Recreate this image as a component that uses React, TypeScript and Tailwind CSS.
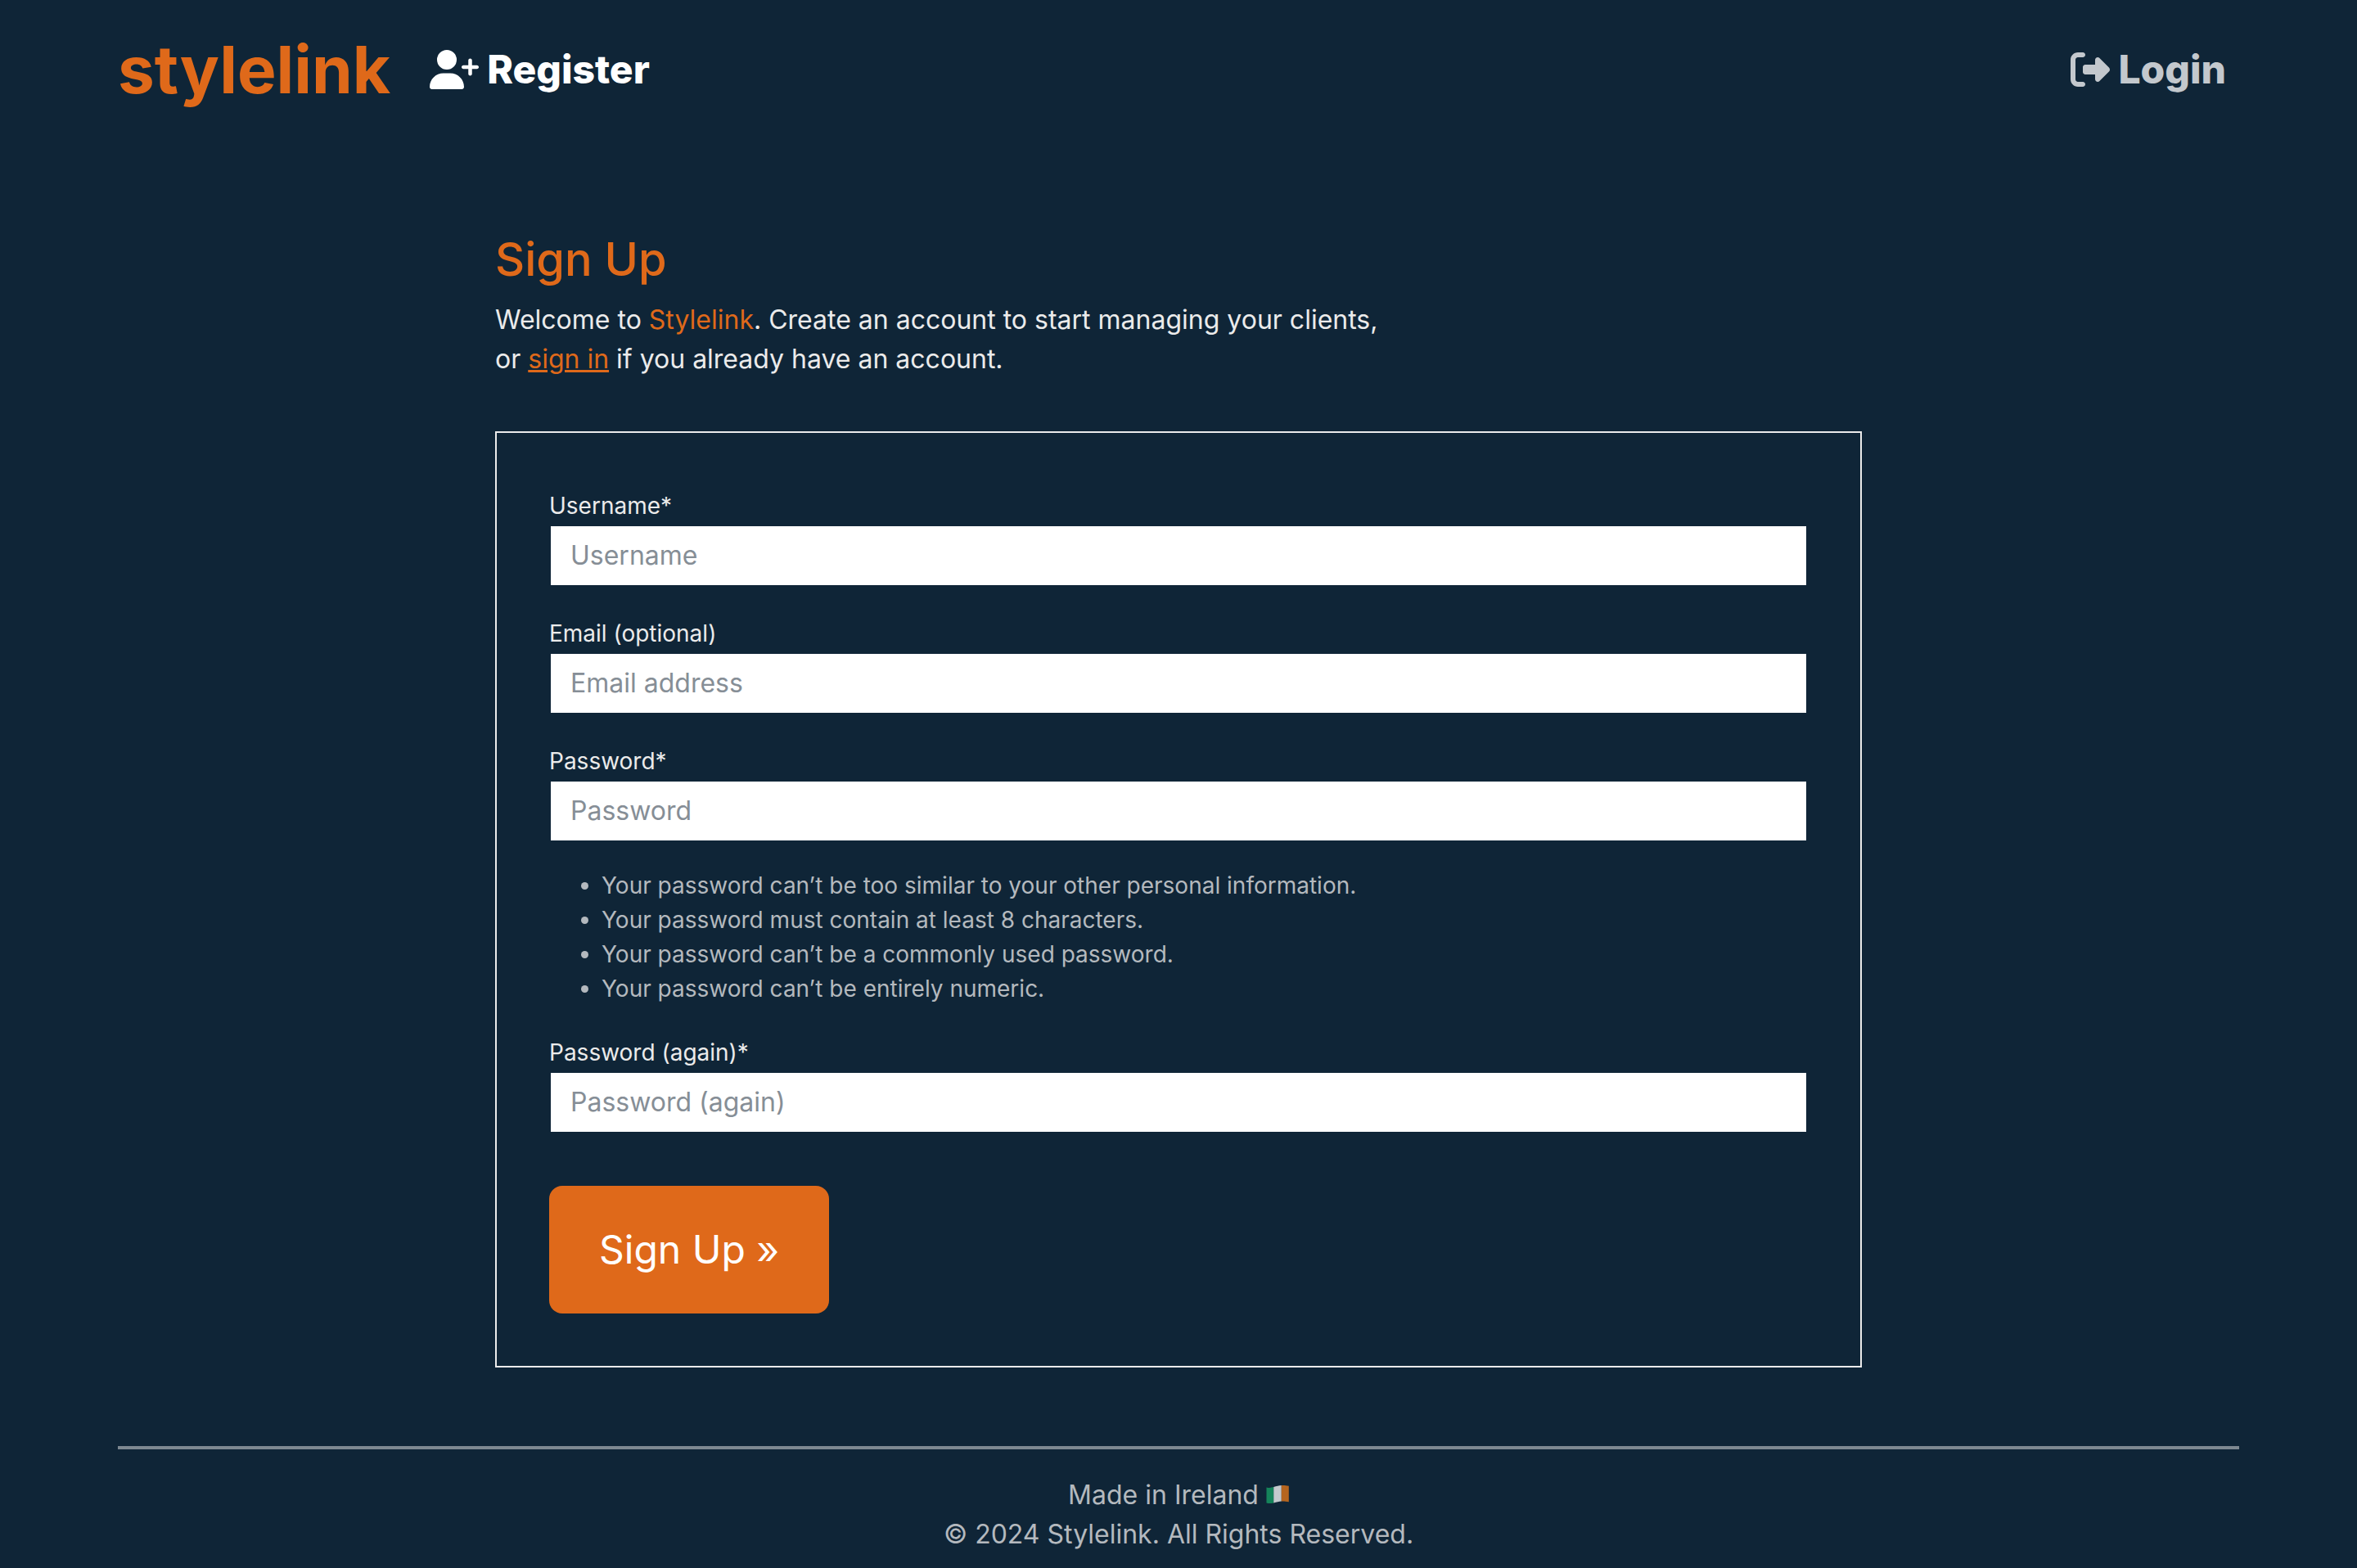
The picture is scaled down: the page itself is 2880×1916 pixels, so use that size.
import { FaRightFromBracket, FaUserPlus } from "react-icons/fa6";

type FieldProps = {
  id: string;
  label: string;
  type: string;
  placeholder: string;
};

function Field({ id, label, type, placeholder }: FieldProps) {
  return (
    <div className="flex flex-col">
      <label htmlFor={id} className="mb-0.5 text-[28px] leading-[42px]">
        {label}
      </label>
      <input
        id={id}
        name={id}
        type={type}
        placeholder={placeholder}
        className="h-19 w-full border-2 border-transparent bg-white bg-clip-padding px-6 pb-0.5 text-[32px] leading-[48px] text-[#212529] placeholder:text-[#868e96] placeholder:opacity-100"
      />
    </div>
  );
}

function IrishFlag() {
  return (
    <svg viewBox="0 0 28 24" className="mb-1.5 inline-block h-6 w-7" role="img" aria-label="Flag of Ireland">
      <path d="M0.500 3.400C3.500 4.200 6 4 9.300 3.100V22.400C6 23.200 3.500 23.400 0.500 22.600Z" fill="#15835a" />
      <path d="M9.300 3.100C12.800 2.200 15.500 1.200 18.800 1.100V20.400C15.500 20.500 12.800 21.500 9.300 22.400Z" fill="#c5cace" />
      <path d="M18.800 1.100C22 1 24.500 1.100 27.800 1.800V21.300C24.500 20.500 22 20.300 18.800 20.400Z" fill="#b5651f" />
    </svg>
  );
}

const passwordRules = [
  "Your password can’t be too similar to your other personal information.",
  "Your password must contain at least 8 characters.",
  "Your password can’t be a commonly used password.",
  "Your password can’t be entirely numeric.",
];

export default function App() {
  return (
    <div className="flex min-h-screen flex-col bg-[#0f2537] px-[5%] font-['Inter','Noto_Sans',sans-serif] text-[32px] leading-[48px] text-[#ebebeb]">
      <header className="flex h-[170px] items-center">
        <a href="#" className="text-[80px] leading-[120px] font-bold text-[#df691a]">
          stylelink
        </a>
        <nav className="flex flex-1 items-center justify-between pr-4 pl-12 text-[48px] leading-[72px] font-extrabold">
          <a href="#register" className="flex items-center gap-2.5 text-white">
            <FaUserPlus className="h-12 w-[60px]" />
            Register
          </a>
          <a href="#login" className="flex items-center gap-2.5 text-[#c3c8cd]">
            <FaRightFromBracket className="size-12" />
            Login
          </a>
        </nav>
      </header>

      <main className="mx-auto flex w-full max-w-[1670px] flex-col pt-[114px]">
        <h1 className="mb-4 text-[56px] leading-[67px] font-medium text-[#df691a]">Sign Up</h1>
        <p>
          Welcome to <span className="text-[#df691a]">Stylelink</span>. Create an account to start managing your clients,
          <br />
          or{" "}
          <a href="#login" className="text-[#df691a] underline">
            sign in
          </a>{" "}
          if you already have an account.
        </p>

        <form className="mt-16 flex flex-col gap-9 border-2 border-[#ebebeb] px-16 pt-[68px] pb-16">
          <Field id="username" label="Username*" type="text" placeholder="Username" />
          <Field id="email" label="Email (optional)" type="email" placeholder="Email address" />
          <div className="flex flex-col gap-8">
            <Field id="password1" label="Password*" type="password" placeholder="Password" />
            <ul className="list-disc pl-16 text-[28px] leading-[42px] text-[#b4b9be]">
              {passwordRules.map((rule) => (
                <li key={rule}>{rule}</li>
              ))}
            </ul>
          </div>
          <Field id="password2" label="Password (again)*" type="password" placeholder="Password (again)" />
          <button
            type="submit"
            className="mt-7 self-start rounded-2xl bg-[#df691a] px-[61px] py-[42px] text-[48px] leading-[72px] text-white"
          >
            Sign Up »
          </button>
        </form>
      </main>

      <footer className="mt-24 border-t-4 border-[#7d8891] pt-8 text-center text-[#b4b9be]">
        <p>
          Made in Ireland <IrishFlag />
        </p>
        <p>© 2024 Stylelink. All Rights Reserved.</p>
      </footer>
    </div>
  );
}
